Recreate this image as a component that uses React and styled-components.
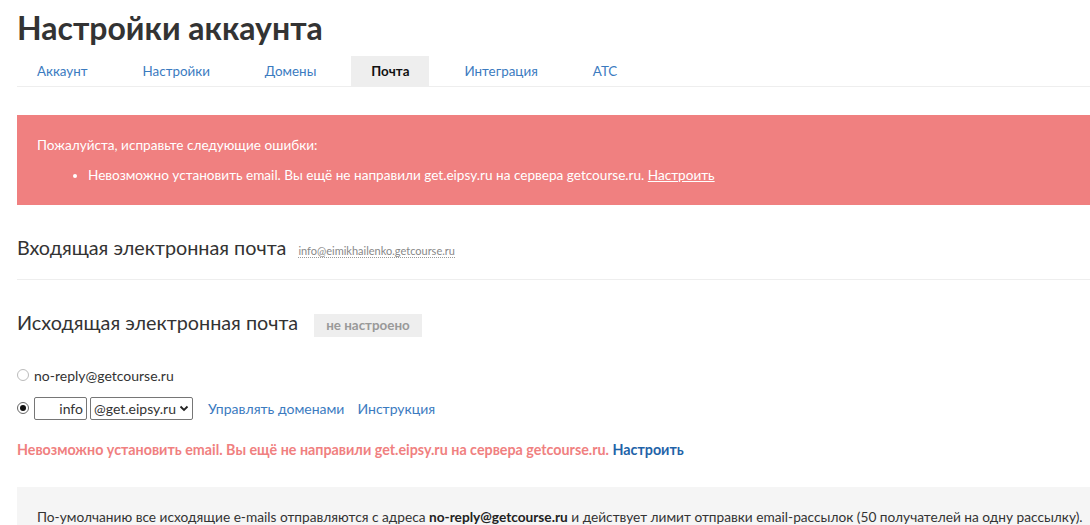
import styled, { createGlobalStyle } from "styled-components";

const GlobalStyle = createGlobalStyle`
  html, body {
    margin: 0;
    padding: 0;
    background: #fff;
    overflow: hidden;
  }
  body {
    font-family: Lato, "Open Sans", "Liberation Sans", sans-serif;
    color: #333;
    font-size: 14px;
  }
`;

const Page = styled.div`
  width: 1130px;
  height: 525px;
  overflow: hidden;
  padding: 0 0 0 17px;
`;

const Title = styled.h1`
  margin: 0;
  padding-top: 8px;
  height: 48px;
  font-size: 32px;
  font-weight: 700;
  color: #333;
  line-height: 40px;
`;

const Tabs = styled.ul`
  display: flex;
  gap: 15px;
  margin: 0;
  padding: 0;
  list-style: none;
  border-bottom: 1px solid #eee;
`;

const Tab = styled.li`
  height: 30px;
  line-height: 30px;
  padding: 0 20px;
  font-size: 13.4px;
  color: ${(p) => (p.$active ? "#111" : "#3b7bbf")};
  font-weight: ${(p) => (p.$active ? 700 : 400)};
  background: ${(p) => (p.$active ? "#eee" : "transparent")};
`;

const Alert = styled.div`
  margin-top: 28px;
  background: #f08080;
  color: #fff;
  padding: 20px 20px 20px;
  height: 90px;
  box-sizing: border-box;
  font-size: 13.6px;

  p {
    margin: 0;
    line-height: 20px;
  }
  ul {
    margin: 10px 0 0;
    padding-left: 51px;
    line-height: 20px;
  }
  a {
    color: #fff;
    text-decoration: underline;
  }
`;

const Section = styled.div`
  display: flex;
  align-items: baseline;
  gap: 12px;
  padding: ${(p) => p.$pad};
  border-bottom: ${(p) => (p.$line ? "1px solid #eee" : "none")};
`;

const Heading = styled.h3`
  margin: 0;
  font-size: 19.8px;
  font-weight: 400;
  color: #333;
`;

const Dotted = styled.span`
  font-size: 11px;
  color: #888;
  border-bottom: 1px dotted #999;
`;

const Badge = styled.span`
  background: #eee;
  color: #999;
  font-size: 13.4px;
  font-weight: 700;
  padding: 3px 12px 4px;
  margin-left: 4px;
`;

const Options = styled.div`
  display: flex;
  flex-direction: column;
  gap: 13px;
  padding-top: 28px;
`;

const OptionRow = styled.label`
  display: flex;
  align-items: center;
  gap: 3px;
  font-size: 14px;
  color: #333;
  height: 20px;
`;

const Radio = styled.span`
  width: 12px;
  height: 12px;
  border-radius: 50%;
  border: 1px solid ${(p) => (p.$checked ? "#666" : "#bbb")};
  box-sizing: border-box;
  background: #fff;
  display: inline-flex;
  align-items: center;
  justify-content: center;
  margin-right: 2px;

  &::after {
    content: "";
    width: 6px;
    height: 6px;
    border-radius: 50%;
    background: ${(p) => (p.$checked ? "#111" : "transparent")};
  }
`;

const TextInput = styled.span`
  width: 53px;
  height: 23px;
  box-sizing: border-box;
  border: 1px solid #767676;
  border-radius: 2px;
  text-align: right;
  padding: 0 3px;
  line-height: 21px;
  font-size: 14px;
`;

const Select = styled.span`
  display: inline-flex;
  align-items: center;
  gap: 3px;
  height: 23px;
  box-sizing: border-box;
  border: 1px solid #767676;
  border-radius: 2px;
  padding: 0 3px;
  font-size: 14px;
`;

const Link = styled.a`
  color: #3b7bbf;
  text-decoration: none;
  margin-left: ${(p) => p.$ml || "0"};
`;

const ErrorText = styled.div`
  margin-top: 23px;
  font-size: 14.3px;
  font-weight: 700;
  color: #f08080;

  a {
    color: #1e63a8;
    text-decoration: none;
  }
`;

const Note = styled.div`
  margin-top: 29px;
  background: #f5f5f5;
  padding: 21px 20px 30px;
  font-size: 13.7px;
  color: #333;
  white-space: nowrap;

  b {
    color: #222;
  }
`;

export default function App() {
  const tabs = ["Аккаунт", "Настройки", "Домены", "Почта", "Интеграция", "АТС"];
  return (
    <>
      <GlobalStyle />
      <Page>
        <Title>Настройки аккаунта</Title>
        <Tabs>
          {tabs.map((t) => (
            <Tab key={t} $active={t === "Почта"}>
              {t}
            </Tab>
          ))}
        </Tabs>
        <Alert>
          <p>Пожалуйста, исправьте следующие ошибки:</p>
          <ul>
            <li>
              Невозможно установить email. Вы ещё не направили get.eipsy.ru на сервера getcourse.ru.{" "}
              <a href="#">Настроить</a>
            </li>
          </ul>
        </Alert>
        <Section $pad="30px 0 20px" $line>
          <Heading>Входящая электронная почта</Heading>
          <Dotted>info@eimikhailenko.getcourse.ru</Dotted>
        </Section>
        <Section $pad="30px 0 0">
          <Heading>Исходящая электронная почта</Heading>
          <Badge>не настроено</Badge>
        </Section>
        <Options>
          <OptionRow>
            <Radio />
            no-reply@getcourse.ru
          </OptionRow>
          <OptionRow>
            <Radio $checked />
            <TextInput>info</TextInput>
            <Select>
              @get.eipsy.ru
              <svg width="10" height="10" viewBox="0 0 10 10">
                <path d="M1.5 3.5 L5 7 L8.5 3.5" stroke="#222" strokeWidth="1.8" fill="none" />
              </svg>
            </Select>
            <Link $ml="12px">Управлять доменами</Link>
            <Link $ml="10px">Инструкция</Link>
          </OptionRow>
        </Options>
        <ErrorText>
          Невозможно установить email. Вы ещё не направили get.eipsy.ru на сервера getcourse.ru.{" "}
          <a href="#">Настроить</a>
        </ErrorText>
        <Note>
          По-умолчанию все исходящие e-mails отправляются с адреса <b>no-reply@getcourse.ru</b> и действует
          лимит отправки email-рассылок (50 получателей на одну рассылку).
        </Note>
      </Page>
    </>
  );
}
